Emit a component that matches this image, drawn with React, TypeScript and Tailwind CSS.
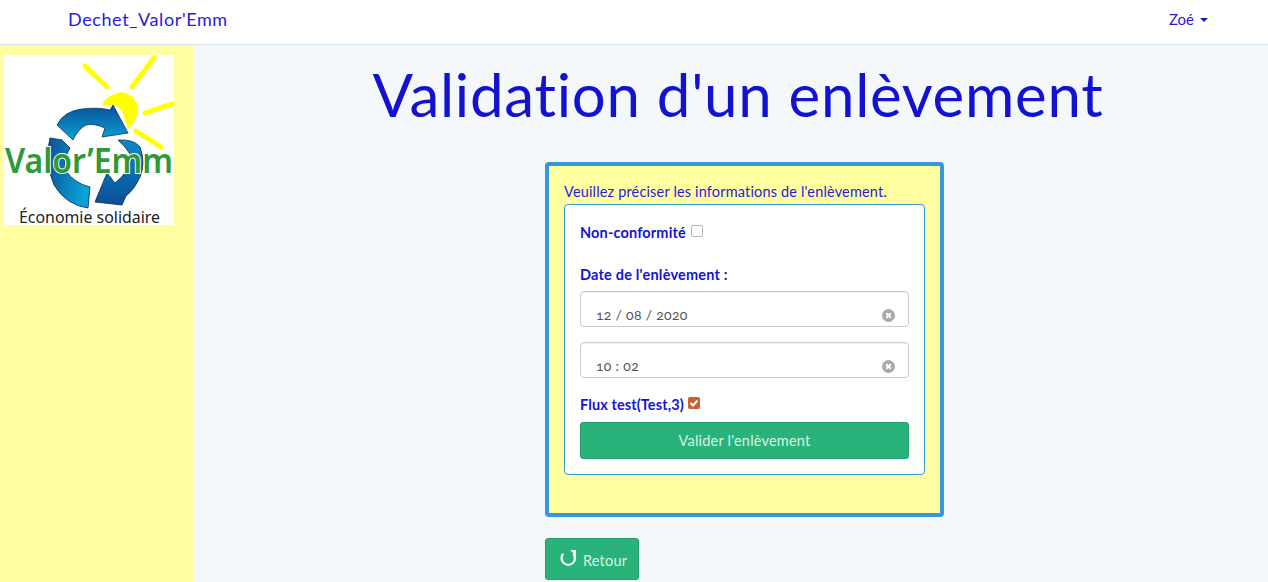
import React from "react";

const font = { fontFamily: "Lato, 'Noto Sans', sans-serif" };

function Logo() {
  return (
    <svg viewBox="0 0 170 170" className="block w-[170px] h-[170px] bg-white overflow-visible">
      <g stroke="#ffff00" strokeWidth="5" strokeLinecap="round" fill="none">
        <path d="M81 11 L103 32" />
        <path d="M150 3 L128 32" />
        <path d="M168 49 L141 58" />
        <path d="M132 76 L157 92" />
      </g>
      <path d="M98 50 Q102 40 118 37 Q131 40 134 52 Q135 64 124 74 L118 56 L112 50 Z" fill="#ffff00" />
      <defs>
        <linearGradient id="b" x1="0" y1="0" x2="0" y2="1">
          <stop offset="0" stopColor="#0a4f96" />
          <stop offset="1" stopColor="#0aa2d8" />
        </linearGradient>
        <linearGradient id="c" x1="0" y1="0" x2="1" y2="0.3">
          <stop offset="0" stopColor="#0a4f96" />
          <stop offset="1" stopColor="#0aa2d8" />
        </linearGradient>
        <linearGradient id="d" x1="0" y1="0" x2="0" y2="1">
          <stop offset="0" stopColor="#0a8ac8" />
          <stop offset="1" stopColor="#0a4f96" />
        </linearGradient>
      </defs>
      <path d="M53 70 Q60 56 78 54 Q94 52 106 55 L109 50 L124 78 L98 82 L101 73 Q90 68 82 70 Q74 74 69 85 Z" fill="url(#b)" stroke="#08305a" strokeWidth="0.8" />
      <path d="M46 83 L58 85 L66 93 Q58 106 62 116 Q70 128 86 132 L84 153 Q62 150 50 130 Q40 106 46 83 Z" fill="url(#c)" stroke="#0a2a50" strokeWidth="0.8" />
      <path d="M114 85 Q130 84 136 92 Q142 108 136 122 Q130 135 122 141 L118 150 L91 147 L103 118 L111 128 Q126 116 128 102 Q122 92 114 85 Z" fill="url(#d)" stroke="#0a2a50" strokeWidth="0.8" />
      <text x="1" y="118" fill="#2e9a35" stroke="#ffffff" strokeWidth="2" paintOrder="stroke" fontSize="35" fontWeight="600" textLength="168" lengthAdjust="spacingAndGlyphs" style={{ fontFamily: "'Noto Sans', sans-serif" }}>Valor’Emm</text>
      <text x="15" y="168" fill="#222" fontSize="15.5" textLength="141" lengthAdjust="spacingAndGlyphs" style={{ fontFamily: "'Noto Sans', sans-serif" }}>Économie solidaire</text>
    </svg>
  );
}

function DateField({ value }: { value: React.ReactNode }) {
  return (
    <div className="h-9 border border-[#ccc] rounded bg-white shadow-[inset_0_1px_1px_rgba(0,0,0,0.075)] flex items-end pl-[15px] pr-[14px] pb-[1px] text-[14px] tracking-[0.3px] text-[#555] leading-[20px] oldstyle-nums">
      <span className="flex-1">{value}</span>
      <span className="w-[13px] h-[13px] rounded-full bg-[#a9a9a9] flex items-center justify-center mb-[3px] -mr-[1px]">
        <svg viewBox="0 0 13 13" className="w-[13px] h-[13px]"><path d="M4.2 4.2 L8.8 8.8 M8.8 4.2 L4.2 8.8" stroke="#fff" strokeWidth="2" /></svg>
      </span>
    </div>
  );
}

export default function App() {
  return (
    <div className="h-[582px] overflow-hidden bg-[#f4f8fb] flex flex-col text-[#1414d2]" style={font}>
      <header className="h-[45px] shrink-0 bg-white border-b border-[#d6e2ef] flex items-center justify-between pl-[68px] pr-[60px] pb-[5px]">
        <span className="text-[18px] tracking-[0.6px] text-[#2a1ae0]">Dechet_Valor'Emm</span>
        <span className="flex items-center gap-[6px] text-[15px] text-[#2a1ae0] mb-[1px]">
          Zoé
          <span className="w-0 h-0 border-x-[4px] border-x-transparent border-t-[4px] border-t-[#1414d2] mt-[2px]" />
        </span>
      </header>
      <div className="flex flex-1 min-h-0">
        <aside className="w-[193px] shrink-0 bg-[#ffff9f] pt-[10px] pl-[4px]">
          <Logo />
        </aside>
        <main className="flex-1 min-w-0">
          <h1 className="text-[60px] leading-[66px] text-center tracking-[0.72px] mt-[16px] mb-[35px] ml-[15px] font-normal text-[#1212d0]">Validation d'un enlèvement</h1>
          <section className="ml-[352px] w-[399px] h-[355px] border-4 border-[#3498db] rounded-[4px] bg-[#ffff9f] px-[15px] pt-[16px]">
            <p className="text-[14.5px] leading-[20px] tracking-[0.16px] text-[#2a1ae0] mb-[2px]">Veuillez préciser les informations de l'enlèvement.</p>
            <div className="h-[271px] border border-[#3498db] rounded-[4px] bg-white px-[15px] pt-[18px]">
              <div className="flex items-start h-[42px] text-[14.5px] leading-[20px] font-bold text-[#1414d2]">
                <span className="tracking-[0.15px]">Non-conformité</span>
                <span className="ml-[5px] mt-[2px] w-[12px] h-[12px] rounded-[2px] border border-[#b5b5b5] bg-white" />
              </div>
              <div className="text-[14.5px] leading-[20px] font-bold tracking-[0.2px] text-[#1414d2] mb-[6px]">Date de l'enlèvement :</div>
              <DateField value="12 / 08 / 2020" />
              <div className="h-[15px]" />
              <DateField value="10 : 02" />
              <div className="flex items-start h-[44px] pt-[17px] text-[14.5px] leading-[20px] font-bold text-[#1414d2]">
                <span className="tracking-[0.1px]">Flux test(Test,3)</span>
                <span className="ml-[4px] mt-[2px] w-[12px] h-[12px] rounded-[2px] bg-[#c9622f] flex items-center justify-center">
                  <svg viewBox="0 0 12 12" className="w-3 h-3"><path d="M2.5 6 L5 8.5 L9.5 3.5" stroke="#fff" strokeWidth="2" fill="none" /></svg>
                </span>
              </div>
              <div className="h-[37px] rounded-[3px] bg-[#2ab27b] border border-[#259e6d] text-[#d6f5e6] text-[14.5px] tracking-[0.2px] flex items-center justify-center">Valider l'enlèvement</div>
            </div>
          </section>
          <div className="ml-[352px] mt-[21px] w-[94px] h-[42px] rounded-[3px] bg-[#2ab27b] border border-[#259e6d] text-[#d6f5e6] text-[14.5px] flex items-center pl-[14px] gap-[6px]">
            <svg viewBox="0 0 16 16" className="w-[17px] h-[17px] -mt-[3px]" fill="none">
              <path d="M3 4.5 A6.3 6.3 0 1 0 12.6 4.5" stroke="#f0fff8" strokeWidth="2.2" />
              <path d="M9.5 1 H15 V6.5 Z" fill="#f0fff8" />
            </svg>
            <span className="mt-[3px] tracking-[0.2px]">Retour</span>
          </div>
        </main>
      </div>
    </div>
  );
}
